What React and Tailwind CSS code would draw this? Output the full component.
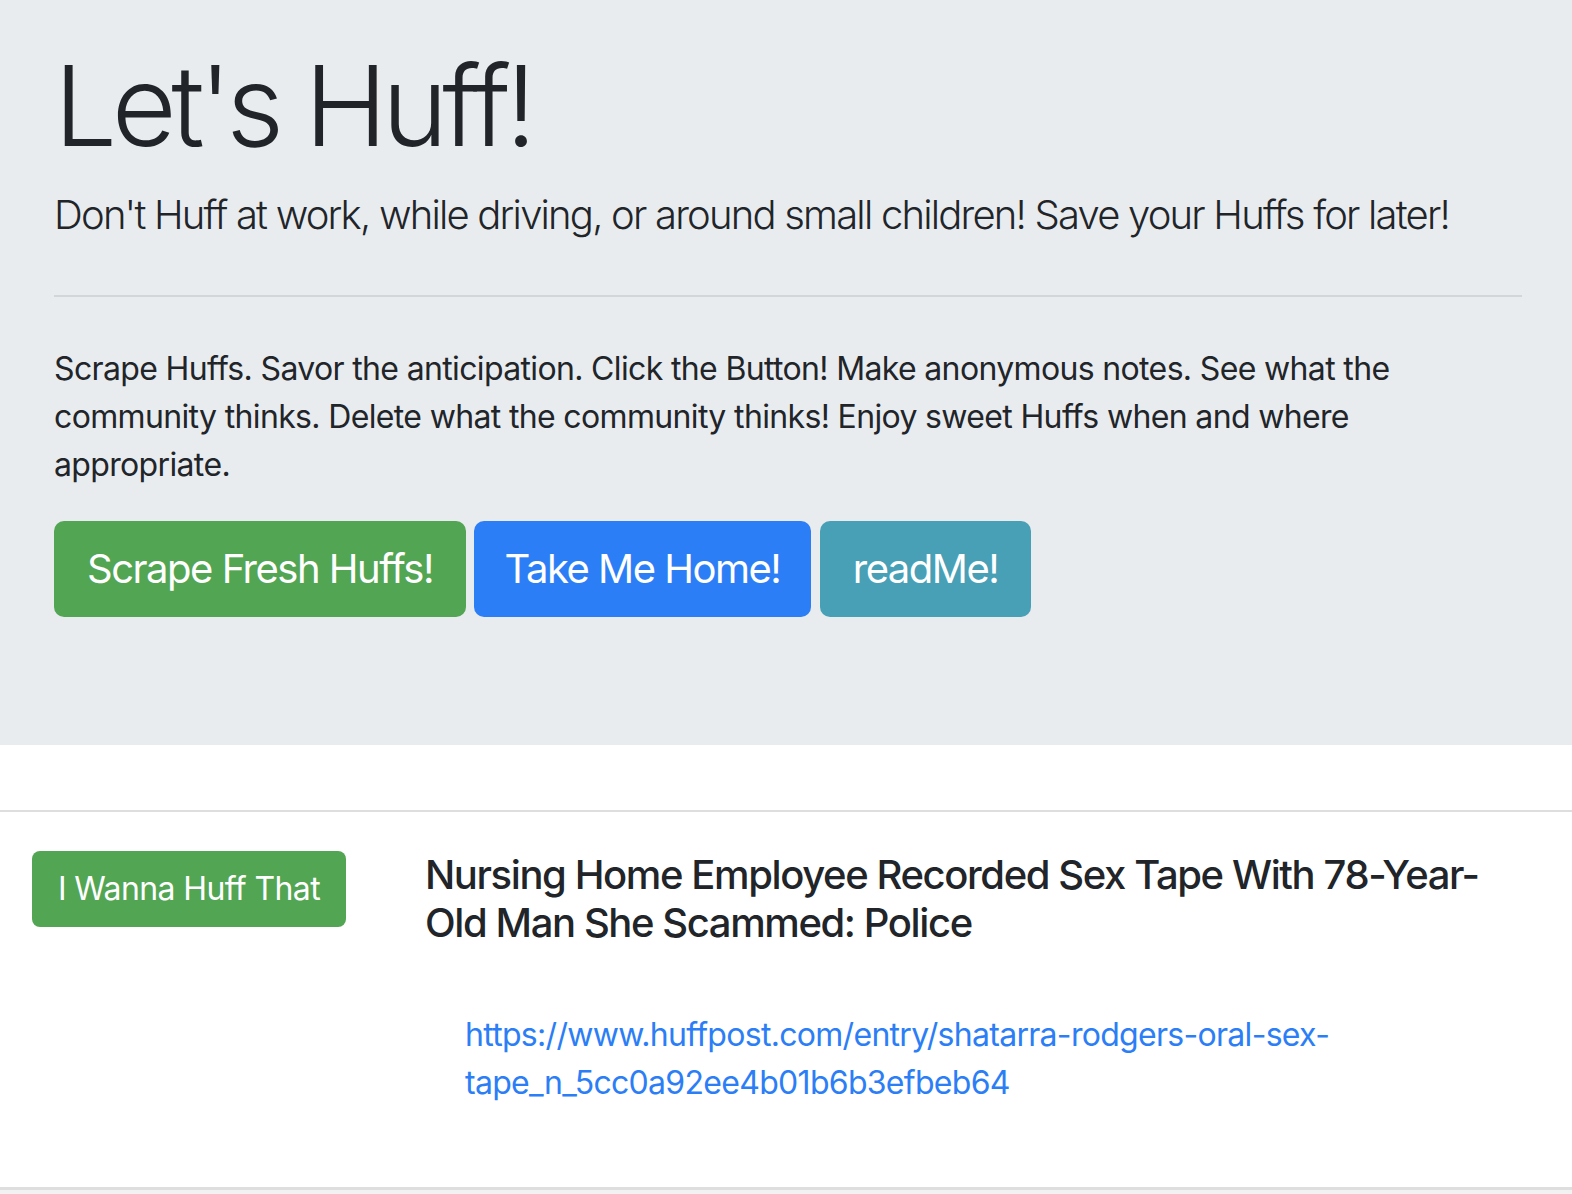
export default function App() {
  const font = { fontFamily: 'Inter, "Noto Sans", sans-serif' };
  return (
    <div className="min-h-[1194px] bg-white text-[#212529]" style={font}>
      <div className="bg-[#e9ecef] pl-[54px] pr-[50px] pt-[38px] pb-[128px]">
        <h1 className="text-[112px] font-light leading-[134px] tracking-[-5.5px] whitespace-nowrap">Let's Huff!</h1>
        <p className="mt-[13px] text-[40px] font-light leading-[60px] tracking-[-1.8px] whitespace-nowrap">
          Don't Huff at work, while driving, or around small children! Save your Huffs for later!
        </p>
        <hr className="mt-[50px] border-0 border-t-2 border-[#d3d6d9]" />
        <p className="mt-[48px] text-[32px] leading-[48px] tracking-[-0.65px]">
          <span className="block whitespace-nowrap">Scrape Huffs. Savor the anticipation. Click the Button! Make anonymous notes. See what the</span>
          <span className="block whitespace-nowrap">community thinks. Delete what the community thinks! Enjoy sweet Huffs when and where</span>
          <span className="block whitespace-nowrap">appropriate.</span>
        </p>
        <div className="mt-[32px] flex gap-[8px]">
          <button className="flex h-[96px] w-[412px] items-center justify-center rounded-[10px] bg-[#52a552] text-[40px] leading-[60px] tracking-[-1.5px] text-white">
            Scrape Fresh Huffs!
          </button>
          <button className="flex h-[96px] w-[337px] items-center justify-center rounded-[10px] bg-[#2b7ef6] text-[40px] leading-[60px] tracking-[-1.5px] text-white">
            Take Me Home!
          </button>
          <button className="ml-[1px] flex h-[96px] w-[211px] items-center justify-center rounded-[10px] bg-[#47a0b6] text-[40px] leading-[60px] tracking-[-1.5px] text-white">
            readMe!
          </button>
        </div>
      </div>
      <div className="mt-[65px] border-t-2 border-[#dedede]">
        <div className="flex pt-[39px] h-[375px]">
          <div className="w-[425px] shrink-0 pl-[32px]">
            <button className="flex h-[76px] w-[314px] items-center justify-center rounded-[8px] bg-[#52a552] text-[32px] leading-[48px] tracking-[-0.6px] text-white">
              I Wanna Huff That
            </button>
          </div>
          <div className="flex-1">
            <h5 className="text-[40px] font-medium leading-[48px] tracking-[-1.4px]">
              <span className="block whitespace-nowrap">Nursing Home Employee Recorded Sex Tape With 78-Year-</span>
              <span className="block whitespace-nowrap">Old Man She Scammed: Police</span>
            </h5>
            <a href="#" className="mt-[64px] block pl-[40px] text-[32px] leading-[48px] tracking-[-0.7px] text-[#2b7ef6]">
              <span className="block whitespace-nowrap">https://www.huffpost.com/entry/shatarra-rodgers-oral-sex-</span>
              <span className="block whitespace-nowrap">tape_n_5cc0a92ee4b01b6b3efbeb64</span>
            </a>
          </div>
        </div>
        <div className="h-[8px] border-t-[3px] border-[#dedede] bg-[#f2f2f2]"></div>
      </div>
    </div>
  );
}
